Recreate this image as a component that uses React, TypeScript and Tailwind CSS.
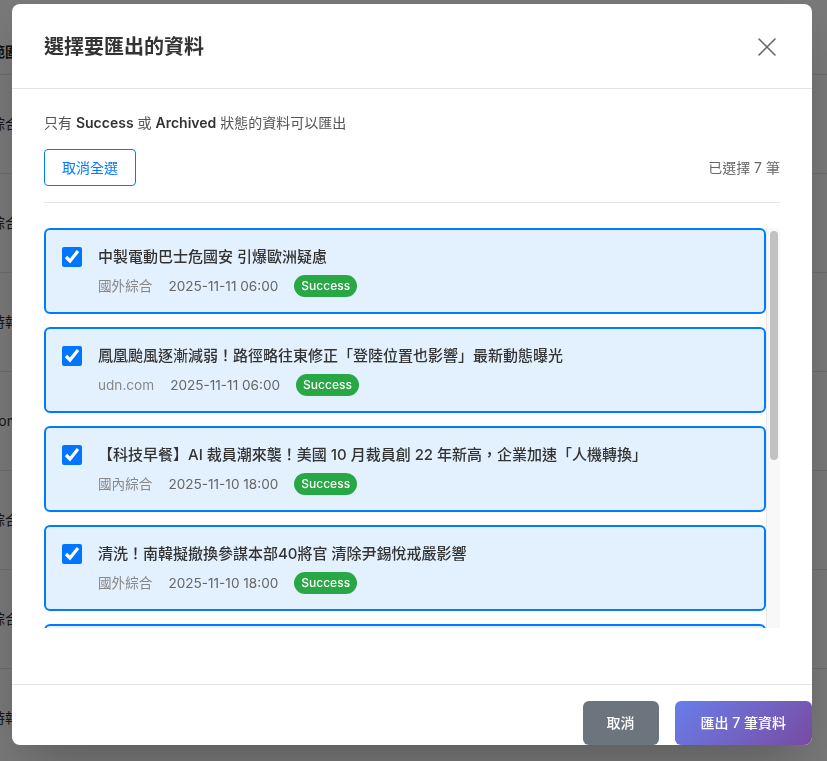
import React from 'react';

type Row = { title: string; source: string; time: string; status: string };

const ROWS: Row[] = [
  { title: '中製電動巴士危國安 引爆歐洲疑慮', source: '國外綜合', time: '2025-11-11 06:00', status: 'Success' },
  { title: '鳳凰颱風逐漸減弱！路徑略往東修正「登陸位置也影響」最新動態曝光', source: 'udn.com', time: '2025-11-11 06:00', status: 'Success' },
  { title: '【科技早餐】AI 裁員潮來襲！美國 10 月裁員創 22 年新高，企業加速「人機轉換」', source: '國內綜合', time: '2025-11-10 18:00', status: 'Success' },
  { title: '清洗！南韓擬撤換參謀本部40將官 清除尹錫悅戒嚴影響', source: '國外綜合', time: '2025-11-10 18:00', status: 'Success' },
  { title: '台股終場上漲 312 點 電子權值股領軍', source: '中國時報', time: '2025-11-10 14:00', status: 'Success' },
  { title: '北市公車動態系統升級 候車資訊更即時', source: '國內綜合', time: '2025-11-10 10:00', status: 'Success' },
  { title: '日圓持續走貶 旅日買氣再升溫', source: '國外綜合', time: '2025-11-09 18:00', status: 'Success' },
];

const BG_ROWS = ['國外綜合', '國外綜合', '中國時報', 'udn.com', '國內綜合', '國外綜合', '中國時報'];

const font = 'font-[Inter,"Noto_Sans_CJK_TC",sans-serif]';

const CloseIcon = () => (
  <svg width="18" height="18" viewBox="0 0 18 18" fill="none" stroke="#666" strokeWidth="1.6" strokeLinecap="round">
    <path d="M1 1L17 17M17 1L1 17" />
  </svg>
);

const BackgroundPage: React.FC = () => (
  <div className="h-screen overflow-hidden bg-white">
    <div className="flex h-[75px] items-end border-b border-[#e5e5e5] pb-[12px]">
      <div className="-ml-[101px] w-[120px] text-right text-sm font-semibold text-[#222]">來源範圍</div>
    </div>
    {BG_ROWS.map((s, i) => (
      <div key={i} className="flex h-[99px] items-center border-b border-[#e5e5e5]">
        <div className="-ml-[101px] w-[120px] text-right text-sm text-[#333]">{s}</div>
      </div>
    ))}
  </div>
);

const ItemCard: React.FC<{ row: Row }> = ({ row }) => (
  <div className="flex shrink-0 items-start gap-4 rounded-md border-2 border-[#007bff] bg-[#e3f0fe] px-4 pt-4 pb-[15px]">
    <input type="checkbox" checked readOnly className="mt-px h-5 w-5 shrink-0 accent-[#0075ff]" />
    <div className="min-w-0 flex-1">
      <div className="mb-[7px] truncate text-[15px] leading-[22px] font-medium text-[#333]">{row.title}</div>
      <div className="flex h-[22px] items-center gap-4 text-[13.6px]">
        <span className="text-[#888]">{row.source}</span>
        <span className="text-[#666]">{row.time}</span>
        <span className="rounded-full bg-[#28a745] px-[7px] py-[3px] text-xs leading-4 font-medium text-white">{row.status}</span>
      </div>
    </div>
  </div>
);

const App: React.FC = () => {
  return (
    <div className={`relative h-screen overflow-hidden ${font}`}>
      <BackgroundPage />
      <div className="fixed inset-0 flex items-start bg-black/[0.53] pt-1 pl-3">
        <div className="flex h-[741px] w-[800px] flex-col overflow-hidden rounded-lg bg-white shadow-2xl">
          {/* header */}
          <div className="flex h-[85px] shrink-0 items-center justify-between border-b border-[#e5e5e5] px-8 pt-px">
            <h2 className="text-xl font-semibold text-[#333]">選擇要匯出的資料</h2>
            <button className="flex h-[26px] w-[26px] items-center justify-center">
              <CloseIcon />
            </button>
          </div>

          {/* body */}
          <div className="h-[595px] shrink-0 px-8 pt-6">
            <p className="mb-4 text-sm leading-5 text-[#555]">
              只有 <b className="font-semibold text-[#333]">Success</b> 或 <b className="font-semibold text-[#333]">Archived</b> 狀態的資料可以匯出
            </p>
            <div className="flex items-center justify-between border-b border-[#e5e5e5] pb-4">
              <button className="rounded border border-[#007bff] px-[17px] py-[7px] text-sm leading-[21px] text-[#007bff]">取消全選</button>
              <span className="text-sm text-[#666]">已選擇 7 筆</span>
            </div>
            <div className="mt-[25px] flex h-[400px]">
              <div className="flex min-w-0 flex-1 flex-col gap-[13px] overflow-hidden">
                {ROWS.map((r, i) => (
                  <ItemCard key={i} row={r} />
                ))}
              </div>
              {/* scrollbar */}
              <div className="w-[14px] shrink-0 border-l border-[#e8e8e8] bg-[#f8f8f8]">
                <div className="mt-[3px] ml-[3px] h-[229px] w-2 rounded-full bg-[#c1c1c1]" />
              </div>
            </div>
          </div>

          {/* footer */}
          <div className="flex shrink-0 justify-end gap-4 border-t border-[#e5e5e5] pt-4">
            <button className="h-11 rounded-md bg-[#6c757d] px-6 text-sm font-medium text-white">取消</button>
            <button className="h-11 rounded-md bg-linear-135 from-[#667eea] to-[#764ba2] px-[26px] text-sm font-medium text-white">
              匯出 7 筆資料
            </button>
          </div>
        </div>
      </div>
    </div>
  );
};

export default App;
